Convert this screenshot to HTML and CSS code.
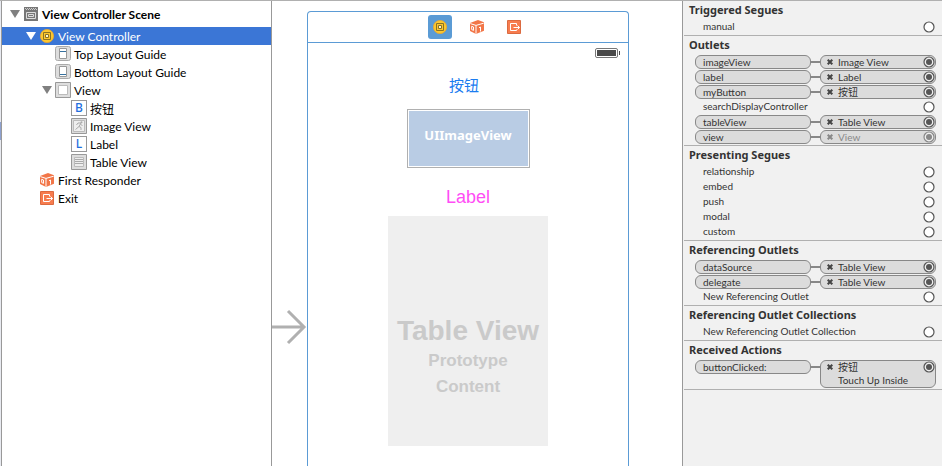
FILE: index.html
```
<!DOCTYPE html>
<html lang="en">
<head>
<meta charset="utf-8">
<title>View Controller Scene</title>
<link rel="stylesheet" href="styles.css">
</head>
<body>
<svg class="defs" aria-hidden="true">
  <symbol id="scene" viewBox="0 0 14 14"><path fill="#777" d="M0 0h14v14H0z"/><path stroke="#ccc" stroke-dasharray="1 1" d="M1 1.500h12M2 2.500h12"/><path fill="none" stroke="#ddd" d="M2.500 5.500h9v6h-9z"/><path fill="none" stroke="#ddd" d="M4.500 7.500h5v2h-5z"/></symbol>
  <symbol id="controller" viewBox="0 0 14 14"><circle cx="7" cy="7" r="6.600" fill="#fcc72f" stroke="#eba82d" stroke-width=".8"/><path fill="none" stroke="#8b7223" d="M3.500 3.500h7v7h-7z"/><path fill="#fff5cf" stroke="#8b7223" d="M5.500 5.500h3v3h-3z"/></symbol>
  <symbol id="responder" viewBox="0 0 14 14"><path fill="#f27648" d="M0 3 8 0l6 2.200v8.600L6 14 0 11z"/><path fill="none" stroke="#fff" d="M.3 3.600 6 5.400v8.400M6 5.400l7.700-2.200M9 7.700l1.500-.7v4.500"/><path fill="none" stroke="#fff" d="M1.700 6.300v3.200l1.800.9V7z"/></symbol>
  <symbol id="exit" viewBox="0 0 14 14"><path fill="#f77c4e" stroke="#db6a40" d="M.5.5h13v13H.5z"/><path fill="none" stroke="#fff" d="M9.500 5.500v-2h-6v7h6v-1M6.500 7.500h6M10.500 5.500l2 2-2 2"/></symbol>
  <symbol id="top" viewBox="0 0 16 16"><rect x=".5" y=".5" width="15" height="14" rx="2" fill="#ddd" stroke="#aaa"/><path fill="#fff" stroke="#999" d="M4.500 2.500h7v10h-7z"/><path stroke="#36719f" d="M5 5.500h6"/></symbol>
  <symbol id="bottom" viewBox="0 0 16 16"><rect x=".5" y=".5" width="15" height="14" rx="2" fill="#ddd" stroke="#aaa"/><path fill="#fff" stroke="#999" d="M4.500 2.500h7v10h-7z"/><path stroke="#36719f" d="M5 10.500h6"/></symbol>
  <symbol id="view" viewBox="0 0 16 16"><path fill="#ddd" stroke="#999" d="M.5.5h15v15H.5z"/><path fill="#fff" stroke="#bbb" d="M3.500 3.500h9v9h-9z"/></symbol>
  <symbol id="image" viewBox="0 0 16 16"><path fill="#ddd" stroke="#999" d="M.5.5h15v15H.5z"/><path fill="#eee" stroke="#bbb" d="M2.500 2.500h11v11h-11z"/><path fill="none" stroke="#aaa" d="m5.500 7 1.500-2h3L8 8.500 4.500 11.500M8 8.500l2 1v2.500M9.500 6.500l2 1"/><circle cx="10.500" cy="4.300" r="1" fill="#aaa"/></symbol>
  <symbol id="table" viewBox="0 0 16 16"><path fill="#ddd" stroke="#999" d="M.5.5h15v15H.5z"/><path fill="#eee" stroke="#bbb" d="M3.500 3.500h9v9h-9z"/><path stroke="#aaa" d="M4 5.500h8M4 7.500h8M4 9.500h8"/></symbol>
  <symbol id="down" viewBox="0 0 10 8"><path fill="currentColor" d="M0 0h10L5 8z"/></symbol>
  <symbol id="cross" viewBox="0 0 6 6"><path stroke="currentColor" stroke-width="2" d="m.7.7 4.600 4.600M5.300.7.7 5.300"/></symbol>
  <symbol id="open" viewBox="0 0 12 12"><circle cx="6" cy="6" r="5" fill="#fff" stroke="currentColor" stroke-width="1.200"/></symbol>
  <symbol id="linked" viewBox="0 0 12 12"><circle cx="6" cy="6" r="5" fill="#eee" stroke="currentColor" stroke-width="1.200"/><circle cx="6" cy="6" r="3" fill="currentColor"/></symbol>
</svg>
<div class="editor">
  <nav class="outline" aria-label="Document outline">
    <div class="gutter"><span class="thumb"></span></div>
    <ul class="tree">
      <li class="node scene"><button class="toggle" aria-label="Collapse scene"><svg><use href="#down"/></svg></button><svg class="icon"><use href="#scene"/></svg><span>View Controller Scene</span></li>
      <li class="node level1 selected"><button class="toggle" aria-label="Collapse controller"><svg><use href="#down"/></svg></button><svg class="icon"><use href="#controller"/></svg><span>View Controller</span></li>
      <li class="node level2"><svg class="icon large"><use href="#top"/></svg><span>Top Layout Guide</span></li>
      <li class="node level2"><svg class="icon large"><use href="#bottom"/></svg><span>Bottom Layout Guide</span></li>
      <li class="node level2 parent"><button class="toggle" aria-label="Collapse view"><svg><use href="#down"/></svg></button><svg class="icon large"><use href="#view"/></svg><span>View</span></li>
      <li class="node level3"><b class="letter">B</b><span>按钮</span></li>
      <li class="node level3"><svg class="icon large"><use href="#image"/></svg><span>Image View</span></li>
      <li class="node level3"><b class="letter">L</b><span>Label</span></li>
      <li class="node level3"><svg class="icon large"><use href="#table"/></svg><span>Table View</span></li>
      <li class="node leaf"><svg class="icon"><use href="#responder"/></svg><span>First Responder</span></li>
      <li class="node leaf"><svg class="icon"><use href="#exit"/></svg><span>Exit</span></li>
    </ul>
  </nav>

  <main class="canvas">
    <svg class="entry" viewBox="0 0 36 36" aria-hidden="true"><path fill="none" stroke="#b0b0b0" stroke-width="3" d="M0 18h31M16 2l16 16-16 16"/></svg>
    <section class="phone">
      <header class="dock">
        <button class="dock-item active" aria-label="View Controller"><svg class="icon"><use href="#controller"/></svg></button>
        <button class="dock-item" aria-label="First Responder"><svg class="icon"><use href="#responder"/></svg></button>
        <button class="dock-item" aria-label="Exit"><svg class="icon"><use href="#exit"/></svg></button>
      </header>
      <div class="status"><svg class="battery" viewBox="0 0 25 10" aria-hidden="true"><rect x=".5" y=".5" width="22" height="9" rx="1.500" fill="#fff" stroke="#777"/><path fill="#4a4a4a" d="M2 2h19v6H2zM24 3h1v4h-1z"/></svg></div>
      <button class="ui-button">按钮</button>
      <div class="image-view">UIImageView</div>
      <div class="ui-label">Label</div>
      <div class="table-view"><strong>Table View</strong><span>Prototype</span><span>Content</span></div>
    </section>
  </main>

  <aside class="inspector" aria-label="Connections">
    <section><h2>Triggered Segues</h2>
      <div class="row"><span class="name">manual</span><button class="port" aria-label="Connect manual"><svg><use href="#open"/></svg></button></div>
    </section>
    <section><h2>Outlets</h2>
      <div class="row linked"><span class="name">imageView</span><i class="wire"></i><div class="target"><button class="remove" aria-label="Disconnect imageView"><svg><use href="#cross"/></svg></button><span>Image View</span><button class="port" aria-label="imageView"><svg><use href="#linked"/></svg></button></div></div>
      <div class="row linked"><span class="name">label</span><i class="wire"></i><div class="target"><button class="remove" aria-label="Disconnect label"><svg><use href="#cross"/></svg></button><span>Label</span><button class="port" aria-label="label"><svg><use href="#linked"/></svg></button></div></div>
      <div class="row linked"><span class="name">myButton</span><i class="wire"></i><div class="target"><button class="remove" aria-label="Disconnect myButton"><svg><use href="#cross"/></svg></button><span>按钮</span><button class="port" aria-label="myButton"><svg><use href="#linked"/></svg></button></div></div>
      <div class="row"><span class="name">searchDisplayController</span><button class="port" aria-label="Connect searchDisplayController"><svg><use href="#open"/></svg></button></div>
      <div class="row linked"><span class="name">tableView</span><i class="wire"></i><div class="target"><button class="remove" aria-label="Disconnect tableView"><svg><use href="#cross"/></svg></button><span>Table View</span><button class="port" aria-label="tableView"><svg><use href="#linked"/></svg></button></div></div>
      <div class="row linked"><span class="name">view</span><i class="wire"></i><div class="target dim"><button class="remove" aria-label="Disconnect view" disabled><svg><use href="#cross"/></svg></button><span>View</span><button class="port" aria-label="view" disabled><svg><use href="#linked"/></svg></button></div></div>
    </section>
    <section><h2>Presenting Segues</h2>
      <div class="row"><span class="name">relationship</span><button class="port" aria-label="Connect relationship"><svg><use href="#open"/></svg></button></div>
      <div class="row"><span class="name">embed</span><button class="port" aria-label="Connect embed"><svg><use href="#open"/></svg></button></div>
      <div class="row"><span class="name">push</span><button class="port" aria-label="Connect push"><svg><use href="#open"/></svg></button></div>
      <div class="row"><span class="name">modal</span><button class="port" aria-label="Connect modal"><svg><use href="#open"/></svg></button></div>
      <div class="row"><span class="name">custom</span><button class="port" aria-label="Connect custom"><svg><use href="#open"/></svg></button></div>
    </section>
    <section><h2>Referencing Outlets</h2>
      <div class="row linked"><span class="name">dataSource</span><i class="wire"></i><div class="target"><button class="remove" aria-label="Disconnect dataSource"><svg><use href="#cross"/></svg></button><span>Table View</span><button class="port" aria-label="dataSource"><svg><use href="#linked"/></svg></button></div></div>
      <div class="row linked"><span class="name">delegate</span><i class="wire"></i><div class="target"><button class="remove" aria-label="Disconnect delegate"><svg><use href="#cross"/></svg></button><span>Table View</span><button class="port" aria-label="delegate"><svg><use href="#linked"/></svg></button></div></div>
      <div class="row"><span class="name">New Referencing Outlet</span><button class="port" aria-label="Connect outlet"><svg><use href="#open"/></svg></button></div>
    </section>
    <section><h2>Referencing Outlet Collections</h2>
      <div class="row"><span class="name">New Referencing Outlet Collection</span><button class="port" aria-label="Connect collection"><svg><use href="#open"/></svg></button></div>
    </section>
    <section><h2>Received Actions</h2>
      <div class="row linked"><span class="name">buttonClicked:</span><i class="wire"></i><div class="target"><button class="remove" aria-label="Disconnect buttonClicked"><svg><use href="#cross"/></svg></button><span>按钮</span><button class="port" aria-label="buttonClicked"><svg><use href="#linked"/></svg></button><span class="event">Touch Up Inside</span></div></div>
    </section>
  </aside>
</div>
</body>
</html>
```
FILE: styles.css
```
* { box-sizing: border-box; }
body { margin: 0; background: #fff; color: #000; font-family: Lato, "Noto Sans CJK SC", sans-serif; }
button { margin: 0; padding: 0; border: 0; background: none; color: inherit; font: inherit; }
svg { display: block; flex: none; }
.defs { position: absolute; width: 0; height: 0; }
.editor { display: grid; grid-template-columns: 272px minmax(0, 1fr) 260px; min-height: 100vh; border-top: 1px solid #b0b0b0; }

.outline { display: flex; border-right: 1px solid #999; }
.gutter { width: 2px; flex: none; padding-top: 121px; background: #e8eaf0; border-right: 1px solid #999; }
.thumb { display: block; height: 18px; background: #8ea1d0; }
.tree { flex: 1; margin: 0; padding: 0; list-style: none; font-size: 12px; }
.node { display: flex; align-items: center; height: 18px; gap: 4px; white-space: nowrap; }
.toggle { width: 10px; height: 8px; color: #808080; }
.toggle svg { width: 10px; height: 8px; }
.icon { width: 14px; height: 14px; }
.icon.large { width: 16px; height: 16px; }
.scene { height: 26px; padding-left: 8px; font-weight: 700; }
.level1 { padding-left: 24px; }
.selected { background: #3b76d6; color: #fff; }
.selected .toggle { color: #fff; }
.level2, .level3 { gap: 3px; }
.level2 { padding-left: 53px; }
.parent { padding-left: 40px; }
.level3 { padding-left: 69px; }
.leaf { padding-left: 38px; }
.letter { width: 16px; height: 16px; border: 1px solid #999; color: #1f6fe0; font: 500 12px/14px "Noto Sans", sans-serif; text-align: center; }

.canvas { display: grid; grid-template-columns: 36px minmax(0, 1fr); padding-right: 53px; }
.entry { width: 36px; height: 36px; margin-top: 308px; }
.phone { display: flex; flex-direction: column; align-items: center; margin-top: 10px; margin-left: -1px; border: 1px solid #5b9bd5; border-bottom: 0; border-radius: 4px 4px 0 0; }
.dock { display: flex; justify-content: center; align-items: center; align-self: stretch; gap: 13px; height: 31px; padding-left: 18px; border-bottom: 1px solid #5b9bd5; }
.dock-item { display: grid; place-items: center; width: 24px; height: 24px; border-radius: 3px; }
.dock-item.active { background: #5b9bd5; }
.status { display: flex; justify-content: flex-end; align-self: stretch; padding: 5px 8px 0; }
.battery { width: 25px; height: 10px; }
.ui-button { margin: 17px 8px 0 0; color: #1b7df0; font-size: 15px; line-height: 20px; }
.image-view { width: 123px; height: 59px; margin-top: 14px; border: 1px solid #b0b0b0; padding: 1px; background: #b9cce4 content-box; color: #fff; font-family: "Noto Sans", sans-serif; font-size: 13px; font-weight: 700; line-height: 48px; text-align: center; }
.ui-label { margin-top: 18px; color: #ff4df5; font: 18px/22px "Liberation Sans", sans-serif; }
.table-view { display: flex; flex-direction: column; align-items: center; width: 160px; height: 230px; margin-top: 8px; padding-top: 98px; background: #efefef; color: #cacaca; font: 700 17px/26px "Liberation Sans", sans-serif; }
.table-view strong { font-size: 28px; line-height: 34px; white-space: nowrap; }

.inspector { border-left: 1px solid #999; background: #f1f1f1; color: #333; font-size: 10px; padding-left: 1px; }
.inspector section { padding: 0 6px 1px 11px; border-bottom: 1px solid #b0b0b0; }
h2 { margin: 0 0 0 -6px; font-family: "Noto Sans", sans-serif; font-size: 11px; line-height: 18px; font-weight: 700; }
.row { display: flex; justify-content: space-between; min-height: 15px; line-height: 15px; padding-right: 1px; white-space: nowrap; }
.row .name { padding-left: 8px; }
.port { display: grid; place-items: center; width: 12px; height: 15px; }
.port svg { width: 12px; height: 12px; }
.row .port { color: #555; }
.linked { display: grid; grid-template-columns: minmax(0, 1fr) 9px minmax(0, 1fr); align-items: start; padding: 1px 0 0; line-height: 12px; }
.linked .name, .target { border: 1px solid #888; border-radius: 6px; background: #dcdcdc; }
.linked .name { padding-left: 7px; }
.wire { height: 2px; margin-top: 6px; background: #888; }
.target { display: grid; grid-template-columns: 17px minmax(0, 1fr) 12px; }
.target .port { height: 12px; }
.remove { display: grid; place-items: center; height: 12px; color: #444; }
.remove svg { width: 6px; height: 6px; }
.event { grid-column: 2; line-height: 14px; }
.dim, .dim .port, .dim .remove { color: #888; }
```
